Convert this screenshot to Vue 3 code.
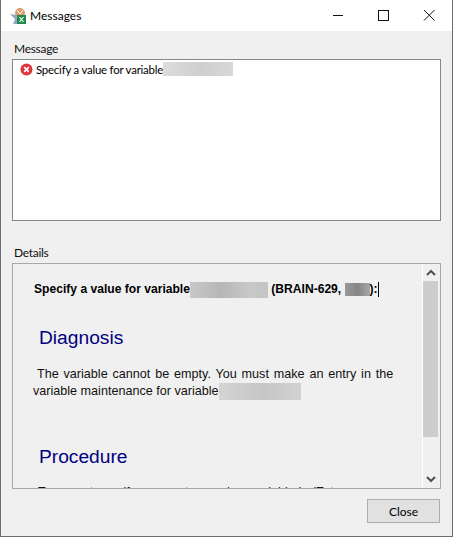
<template>
  <div class="window">
    <header class="titlebar">
      <svg class="app-icon" width="18" height="18" viewBox="0 0 18 18">
        <path d="M1 7 L7 8 L9 13 L8 17 L4 17 L6 12 Z" fill="#8fa9c4" />
        <circle cx="11" cy="6" r="5" fill="#dd9a68" />
        <path d="M8 3 L11 7 L14 3" fill="none" stroke="#fff" stroke-width="1" />
        <rect x="8" y="8" width="9" height="9" fill="#1f8a4c" />
        <path d="M10.5 10 L14.5 15 M14.5 10 L10.5 15" stroke="#fff" stroke-width="1.2" />
      </svg>
      <span class="title">Messages</span>
      <div class="controls">
        <svg width="46" height="31" viewBox="0 0 46 31"><path d="M19 15.5 H29" stroke="#111" /></svg>
        <svg width="46" height="31" viewBox="0 0 46 31"><rect x="18.5" y="10.5" width="10" height="10" fill="none" stroke="#111" /></svg>
        <svg width="46" height="31" viewBox="0 0 46 31"><path d="M18 10 L28.5 20.5 M28.5 10 L18 20.5" stroke="#111" /></svg>
      </div>
    </header>

    <main class="content">
      <label class="group-label">Message</label>
      <div class="message-list">
        <div class="message-row">
          <svg class="error-icon" width="13" height="13" viewBox="0 0 13 13">
            <circle cx="6.5" cy="6.5" r="6" fill="#e0343c" />
            <path d="M4.2 4.2 L8.8 8.8 M8.8 4.2 L4.2 8.8" stroke="#fff" stroke-width="1.8" />
          </svg>
          <span>Specify a value for variable</span>
          <span class="redact redact-list"></span>
        </div>
      </div>

      <label class="group-label details-label">Details</label>
      <div class="details">
        <div class="doc">
          <p class="doc-title">Specify a value for variable<span class="redact redact-title"></span> (BRAIN-629, <span class="redact redact-short"></span>):<span class="caret"></span></p>
          <h2 class="doc-heading">Diagnosis</h2>
          <p class="doc-text"><span class="indent">The variable cannot be empty. You must make an entry in the</span><br />variable maintenance for variable<span class="redact redact-body"></span></p>
          <h2 class="doc-heading procedure">Procedure</h2>
          <p class="doc-text cut">To correct specify a correct name in a variable in (Extras</p>
        </div>
        <div class="scrollbar">
          <svg width="16" height="17" viewBox="0 0 16 17"><path d="M4 11 L8 7 L12 11" fill="none" stroke="#505050" stroke-width="2" /></svg>
          <div class="track"><div class="thumb"></div></div>
          <svg width="16" height="17" viewBox="0 0 16 17"><path d="M4 6 L8 10 L12 6" fill="none" stroke="#505050" stroke-width="2" /></svg>
        </div>
      </div>

      <div class="footer">
        <button class="close-btn">Close</button>
      </div>
    </main>
  </div>
</template>

<script setup>
</script>

<style>
html, body {
  margin: 0;
  padding: 0;
  background: #f0f0f0;
}
</style>

<style scoped>
.window {
  width: 453px;
  height: 537px;
  box-sizing: border-box;
  border: 1px solid #6e6e6e;
  border-top: none;
  display: flex;
  flex-direction: column;
  background: #f0f0f0;
  font-family: Lato, sans-serif;
  font-size: 12px;
  color: #000;
  overflow: hidden;
}

.titlebar {
  height: 31px;
  flex: none;
  background: #fff;
  display: flex;
  align-items: center;
  padding-left: 8px;
}

.app-icon {
  flex: none;
  margin-right: 3px;
}

.title {
  font-size: 12px;
}

.controls {
  margin-left: auto;
  display: flex;
}

.content {
  flex: 1;
  display: flex;
  flex-direction: column;
  padding: 0 11px;
  min-height: 0;
}

.group-label {
  display: block;
  height: 16px;
  line-height: 16px;
  padding-left: 2px;
  font-size: 12px;
  letter-spacing: -0.3px;
  color: #111;
}

.group-label:first-child {
  margin-top: 10px;
  margin-bottom: 2px;
}

.details-label {
  margin-top: 24px;
  margin-bottom: 2px;
}

.message-list {
  height: 162px;
  box-sizing: border-box;
  background: #fff;
  border: 1px solid #828790;
  flex: none;
}

.message-row {
  display: flex;
  align-items: center;
  height: 16px;
  padding: 1px 0 0 7px;
  white-space: nowrap;
  font-size: 11.4px;
  letter-spacing: -0.2px;
}

.error-icon {
  margin-right: 3px;
  flex: none;
}

.redact {
  display: inline-block;
  vertical-align: middle;
}

.redact-list {
  width: 70px;
  height: 14px;
  background: linear-gradient(90deg, #dcdcdc, #cfcfcf 55%, #d8d8d8);
}

.redact-title {
  width: 78px;
  height: 16px;
  background: linear-gradient(90deg, #c8c8c8, #b6b6b6 40%, #c8c8c8 75%, #c4c4c4);
}

.redact-short {
  width: 25px;
  height: 13px;
  background: linear-gradient(90deg, #9a9a9a, #858585 50%, #a8a8a8);
}

.redact-body {
  width: 82px;
  height: 17px;
  background: linear-gradient(90deg, #d4d4d4, #c6c6c6 55%, #d2d2d2);
}

.details {
  height: 226px;
  box-sizing: border-box;
  border: 1px solid #a9a9ad;
  flex: none;
  display: flex;
  overflow: hidden;
  background: #f0f0f0;
}

.doc {
  flex: 1;
  min-width: 0;
  overflow: hidden;
  padding: 17px 0 0 21px;
  font-family: "Liberation Sans", Arial, sans-serif;
  white-space: nowrap;
}

.doc-title {
  margin: 0;
  font-weight: bold;
  font-size: 12.1px;
  line-height: 17px;
  color: #000;
}

.caret {
  display: inline-block;
  width: 1px;
  height: 15px;
  background: #000;
  vertical-align: middle;
}

.doc-heading {
  margin: 29px 0 0 5px;
  font-weight: normal;
  font-size: 19.2px;
  line-height: 22px;
  color: #000080;
}

.doc-text {
  margin: 17px 0 0 -1px;
  font-size: 12.6px;
  line-height: 17px;
  color: #111;
}

.indent {
  padding-left: 4px;
  word-spacing: 1.35px;
}

.procedure {
  margin-top: 46px;
}

.cut {
  margin-top: 16px;
  padding-left: 5px;
}

.scrollbar {
  width: 17px;
  flex: none;
  border-left: 1px solid #fff;
  display: flex;
  flex-direction: column;
  background: #f0f0f0;
}

.scrollbar svg {
  flex: none;
}

.track {
  flex: 1;
  min-height: 0;
}

.thumb {
  height: 156px;
  margin-right: 2px;
  background: #cdcdcd;
}

.footer {
  display: flex;
  justify-content: flex-end;
  margin-top: 10px;
  padding-right: 1px;
}

.close-btn {
  width: 73px;
  height: 24px;
  padding: 0;
  background: #e1e1e1;
  border: 1px solid #adadad;
  font-family: Lato, sans-serif;
  font-size: 12px;
  color: #000;
}
</style>
